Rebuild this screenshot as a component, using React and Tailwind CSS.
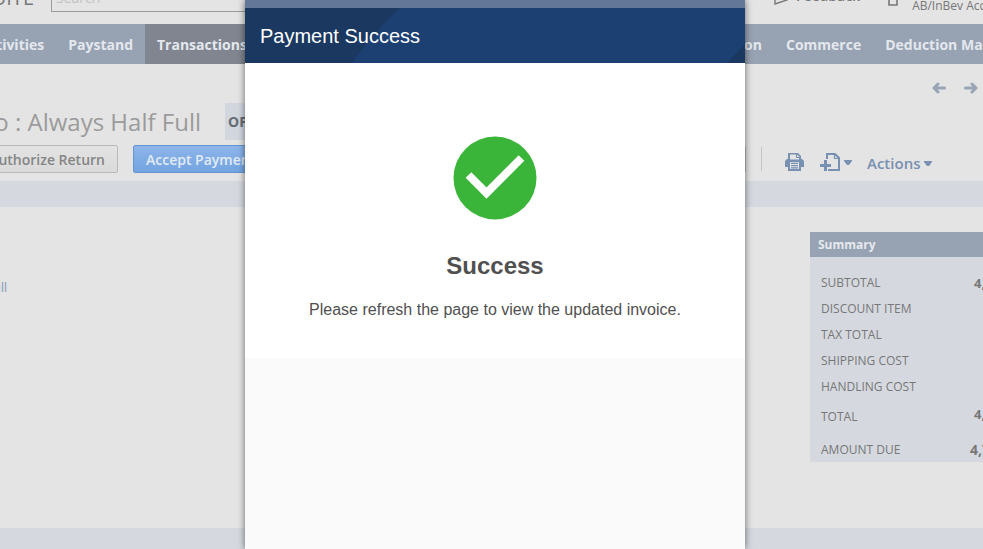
import React from 'react';

const totals = [
  { label: 'SUBTOTAL', value: '4,7' },
  { label: 'DISCOUNT ITEM' },
  { label: 'TAX TOTAL' },
  { label: 'SHIPPING COST' },
  { label: 'HANDLING COST' },
];

const NavLink = ({ children, active }) => (
  <a
    href="#"
    className={`flex h-10 shrink-0 items-center px-3 pt-0.5 whitespace-nowrap ${active ? 'bg-[#80858f]' : ''}`}
  >
    {children}
  </a>
);

const Caret = () => (
  <svg className="h-[5px] w-2" viewBox="0 0 8 5" fill="currentColor" aria-hidden="true">
    <path d="M0 0h8v1L5 5H3L0 1z" />
  </svg>
);

const TopBar = () => (
  <header className="flex h-6 items-end overflow-hidden text-[#777]">
    <div className="mb-3 flex w-[34px] shrink-0 justify-end text-xl leading-7">NETSUITE</div>
    <input
      type="text"
      aria-label="Search"
      placeholder="Search"
      className="mb-3 ml-[17px] h-[30px] w-72 shrink-0 border border-[#999c9c] px-1 text-sm placeholder:text-[#c0c0c0]"
    />
    <div className="ml-auto flex w-[209px] shrink-0 items-end whitespace-nowrap">
      <button type="button" className="mb-[18px] flex items-end gap-2 text-sm leading-5 font-semibold">
        <svg className="h-4 w-[14px]" viewBox="0 0 14 16" fill="none" stroke="currentColor" strokeWidth="1.4" aria-hidden="true">
          <path d="M1 1h12v9L1 14z" />
        </svg>
        Feedback
      </button>
      <svg className="mb-[18px] ml-7 h-4 w-[10px] shrink-0" viewBox="0 0 10 16" fill="none" stroke="currentColor" strokeWidth="1.6" aria-hidden="true">
        <path d="M1 1h8v14H1z" />
      </svg>
      <span className="mb-[10px] ml-[14px] text-xs">AB/InBev Account</span>
    </div>
  </header>
);

const Toolbar = () => (
  <div className="flex h-9 items-start">
    <div className="flex w-[118px] shrink-0 justify-end">
      <button type="button" className="h-7 shrink-0 rounded-xs border border-[#b9babc] bg-linear-to-b from-[#e3e3e3] to-[#dadada] px-3 pt-0.5 text-sm font-semibold text-[#858585]">
        Authorize Return
      </button>
    </div>
    <button type="button" className="ml-[15px] h-7 shrink-0 rounded-xs border border-[#6495d2] bg-linear-to-b from-[#8db5e9] to-[#73a4e1] px-3 pt-0.5 text-sm font-semibold text-[#e2eaf4]">
      Accept Payment
    </button>
    <span className="mr-[15px] ml-auto h-7 w-10 rounded-xs border border-[#b9babc]" />
    <div className="flex w-[222px] shrink-0 items-center text-[#7890b1]">
      <span className="h-6 w-px bg-[#c4c5c7]" />
      <button type="button" aria-label="Print" className="mt-1.5 ml-[23px]">
        <svg className="h-[18px] w-[19px]" viewBox="0 0 19 18" aria-hidden="true">
          <path fill="currentColor" d="M3 0h10l3 3v3h1l2 2v6h-3v4H3v-4H0V8l2-2h1z" />
          <path fill="#e4e4e4" d="M5 1.500h6V5h3v1.500H5zM12 1.500V4h2.500zM5 9h9v7H5z" />
          <path fill="currentColor" d="M6 9.800h7v1.200H6zM6 12h7v1.200H6zM6 14.200h7v1.200H6z" />
        </svg>
      </button>
      <button type="button" aria-label="Create new" className="mt-1.5 ml-4 flex items-center gap-1">
        <svg className="h-[18px] w-5" viewBox="0 0 20 18" fill="none" stroke="currentColor" aria-hidden="true">
          <path strokeWidth="2" d="M7 6V1h8l4 4v12H9v-1" />
          <path strokeWidth="1.2" d="M14.500 1v4.500H19" />
          <path strokeWidth="3" d="M0 12.500h11M5.500 7v11" />
        </svg>
        <Caret />
      </button>
      <button type="button" className="mt-2 ml-[15px] flex items-center gap-1 text-[15px] leading-5 font-semibold">
        Actions
        <Caret />
      </button>
    </div>
  </div>
);

const Summary = () => (
  <section className="ml-auto w-[173px] overflow-hidden bg-[#d5d9df]">
    <h2 className="bg-[#97a2b2] px-2 text-xs leading-[25px] font-bold text-[#e6e9ee]">Summary</h2>
    <table className="mt-[13px] w-full table-fixed text-left text-xs leading-4 text-[#777]">
      <tbody>
        {totals.map((row) => (
          <tr key={row.label} className="h-[26px]">
            <th scope="row" className="pl-[11px] font-normal">{row.label}</th>
            <td className="w-[13px] pl-1 text-[13px] font-bold whitespace-nowrap">{row.value}</td>
          </tr>
        ))}
        <tr className="h-[34px]">
          <th scope="row" className="pl-[11px] font-normal">TOTAL</th>
          <td className="pb-1.5 pl-1 text-[13px] font-bold whitespace-nowrap">4,7</td>
        </tr>
        <tr className="h-7">
          <th scope="row" className="pt-1 pl-[11px] font-normal">AMOUNT DUE</th>
          <td className="pt-1 text-sm leading-4 font-bold whitespace-nowrap">4,7</td>
        </tr>
      </tbody>
    </table>
  </section>
);

const PaymentDialog = () => (
  <div className="fixed inset-0 flex justify-center pl-[7px]">
    <div
      role="dialog"
      aria-labelledby="dialog-title"
      className="flex w-[500px] flex-col bg-[#fafafa] font-['Liberation_Sans',Arial,sans-serif] shadow-[0_0_7px_rgba(0,0,0,0.55)]"
    >
      <div className="h-2 bg-[#637899]" />
      <div className="relative flex h-[55px] items-center bg-[#1c4072] px-[15px]">
        <svg className="absolute inset-0 h-full w-full" viewBox="0 0 500 55" preserveAspectRatio="none" aria-hidden="true">
          <path fill="#1b3861" d="M0 0h155Q132 20 107 55H0zM500 36v19h-18z" />
        </svg>
        <h1 id="dialog-title" className="relative text-xl text-white">Payment Success</h1>
      </div>
      <div className="flex flex-col items-center bg-white pt-[73px] pb-9 text-[#505050]">
        <svg className="h-[84px] w-[84px]" viewBox="0 0 84 84" aria-hidden="true">
          <circle cx="42" cy="42" r="41.500" fill="#3ab53a" />
          <path fill="none" stroke="#fff" strokeWidth="8" d="M15.500 39L33.500 57L68.500 22" />
        </svg>
        <h2 className="mt-[30px] text-2xl font-bold">Success</h2>
        <p className="mt-4 text-base">Please refresh the page to view the updated invoice.</p>
      </div>
    </div>
  </div>
);

export default function App() {
  return (
    <div className="flex min-h-screen flex-col overflow-hidden bg-[#e4e4e4] font-['Open_Sans','Noto_Sans',sans-serif]">
      <TopBar />
      <nav className="flex bg-[#97a2b2] text-sm font-bold text-[#e4e8ee]">
        <div className="flex w-[145px] shrink-0 justify-end">
          <NavLink>Activities</NavLink>
          <NavLink>Paystand</NavLink>
        </div>
        <NavLink active>Transactions</NavLink>
        <div className="flex min-w-0 flex-1 justify-end">
          <NavLink>Customization</NavLink>
        </div>
        <div className="flex w-[209px] shrink-0 overflow-hidden">
          <NavLink>Commerce</NavLink>
          <NavLink>Deduction Management</NavLink>
        </div>
      </nav>

      <div className="flex h-[39px] items-center justify-end gap-4 px-1 pt-2 text-[#97a5b7]">
        <button type="button" aria-label="Previous">
          <svg className="h-3 w-4" viewBox="0 0 16 12" fill="none" stroke="currentColor" strokeWidth="3" strokeLinecap="round" strokeLinejoin="round" aria-hidden="true">
            <path d="M13.500 6H3M7 2L3 6l4 4" />
          </svg>
        </button>
        <button type="button" aria-label="Next">
          <svg className="h-3 w-4" viewBox="0 0 16 12" fill="none" stroke="currentColor" strokeWidth="3" strokeLinecap="round" strokeLinejoin="round" aria-hidden="true">
            <path d="M2.500 6H13M9 2l4 4-4 4" />
          </svg>
        </button>
      </div>

      <div className="mb-[5px] flex h-[37px] items-center">
        <div className="flex w-[201px] shrink-0 justify-end text-2xl whitespace-nowrap text-[#9b9b9b]">o : Always Half Full</div>
        <span className="ml-6 flex h-full items-center bg-[#d2d7de] px-[3px] text-sm font-bold text-[#666b72]">OPEN</span>
      </div>
      <Toolbar />

      <div className="h-[26px] bg-[#d5d9df]" />
      <main className="flex items-start pt-[25px] pb-[66px]">
        <a href="#" className="mt-12 flex w-[7px] justify-end text-xs whitespace-nowrap text-[#8597b3]">Half Full</a>
        <Summary />
      </main>
      <div className="grow bg-[#d5d9df]" />

      <PaymentDialog />
    </div>
  );
}
